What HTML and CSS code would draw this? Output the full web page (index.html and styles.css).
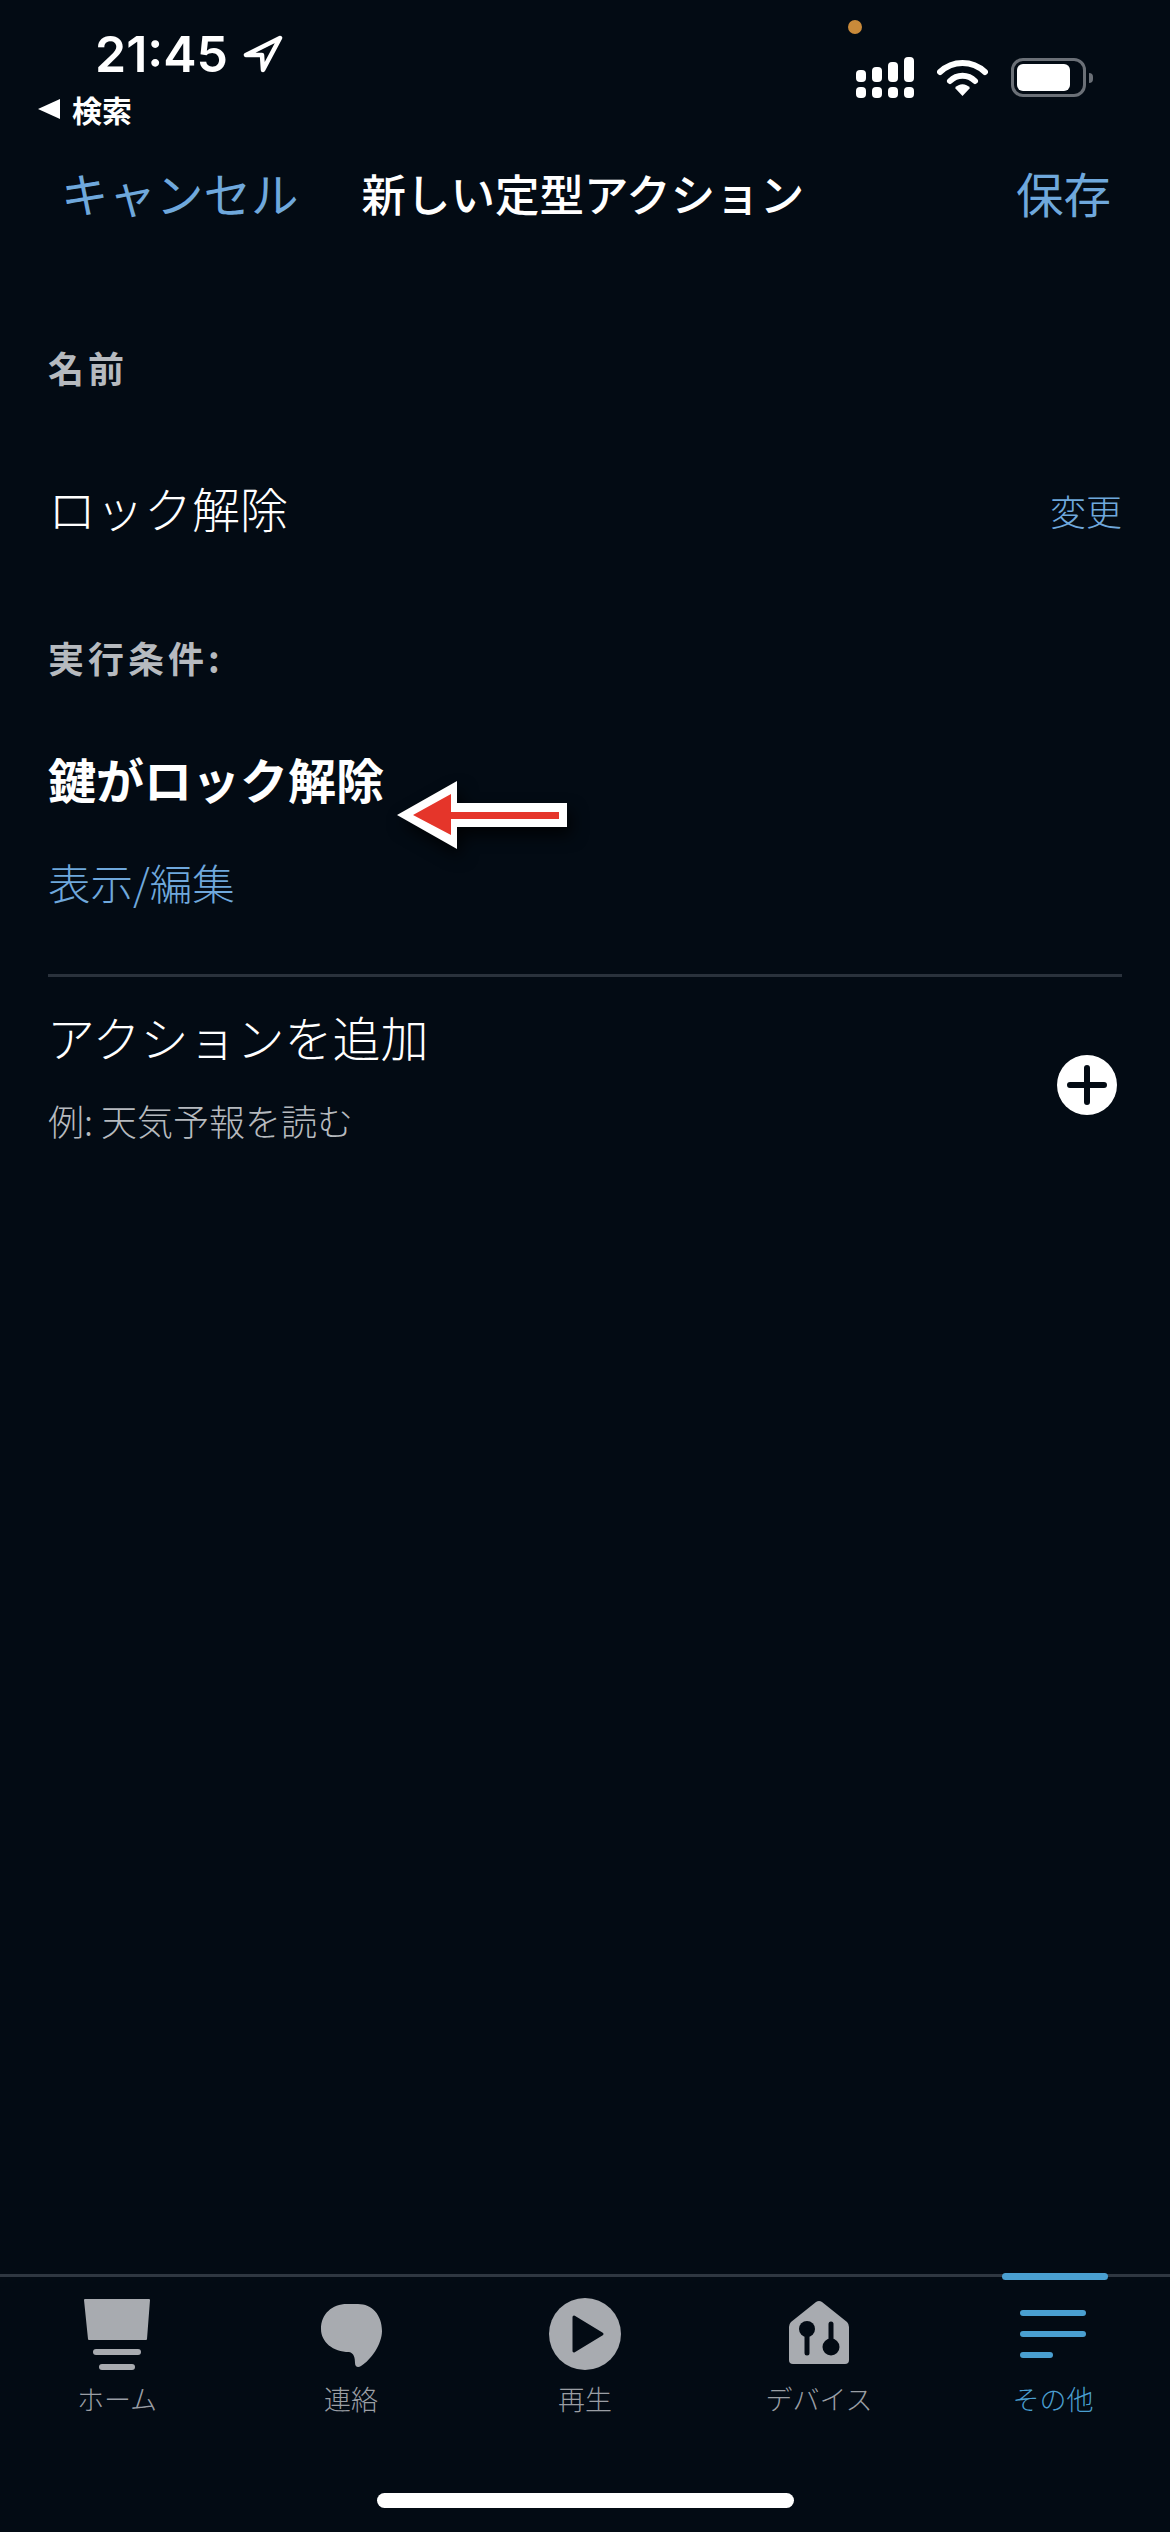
FILE: index.html
```html
<!DOCTYPE html>
<html lang="ja">
  <head>
    <meta charset="utf-8">
    <title>新しい定型アクション</title>
    <link rel="stylesheet" href="styles.css">
  </head>
  <body>
    <div class="page">
      <div class="statusbar">
        <div class="status-left">
          <div class="clock">
            <span class="time">21:45</span>
            <svg class="loc" viewBox="0 0 41 38"><path d="M38 3 L4 20 L20 20 L21 35 Z" fill="none" stroke="#fff" stroke-width="4.500" stroke-linejoin="round"/></svg>
          </div>
          <div class="back"><span class="back-arrow"></span>検索</div>
        </div>
        <div class="status-right">
          <span class="dot"></span>
          <div class="indicators">
            <svg class="signal" viewBox="0 0 58 41">
              <rect x="0" y="13" width="10" height="12" rx="4" fill="#fff"/>
              <rect x="16" y="10" width="10" height="15" rx="4" fill="#fff"/>
              <rect x="32" y="5" width="10" height="20" rx="4" fill="#fff"/>
              <rect x="48" y="0" width="10" height="25" rx="4" fill="#fff"/>
              <rect x="0" y="30" width="10" height="11" rx="4" fill="#fff"/>
              <rect x="16" y="30" width="10" height="11" rx="4" fill="#fff"/>
              <rect x="32" y="30" width="10" height="11" rx="4" fill="#fff"/>
              <rect x="48" y="30" width="10" height="11" rx="4" fill="#fff"/>
            </svg>
            <svg class="wifi" viewBox="0 0 51 37">
              <path d="M3 13 C16 1 35 1 48 13" fill="none" stroke="#fff" stroke-width="6" stroke-linecap="round"/>
              <path d="M13 22 C20 15 31 15 38 22" fill="none" stroke="#fff" stroke-width="6" stroke-linecap="round"/>
              <path d="M18 29 C22 24 29 24 33 29 L25.500 37 Z" fill="#fff"/>
            </svg>
            <div class="battery"><span class="battery-fill"></span></div>
            <span class="battery-nub"></span>
          </div>
        </div>
      </div>

      <div class="navbar">
        <a class="nav-link nav-cancel">キャンセル</a>
        <div class="nav-title">新しい定型アクション</div>
        <a class="nav-link nav-save">保存</a>
      </div>

      <div class="content">
        <div class="label label-name">名前</div>
        <div class="name-row">
          <div class="name">ロック解除</div>
          <a class="change">変更</a>
        </div>
        <div class="label label-when">実行条件:</div>
        <div class="trigger">
          <div class="trigger-name">鍵がロック解除</div>
          <svg class="arrow" viewBox="0 0 180 78">
            <path d="M10 39 L70 5 V27 H180 V51 H70 V73 Z" fill="#fff"/>
            <path d="M26 39 L64 18 V36 H172 V43 H64 V59 Z" fill="#e5352a"/>
          </svg>
        </div>
        <a class="edit">表示/編集</a>
        <div class="divider"></div>
        <div class="action-row">
          <div>
            <div class="action-title">アクションを追加</div>
            <div class="action-hint">例: 天気予報を読む</div>
          </div>
          <svg class="plus" viewBox="0 0 60 60">
            <circle cx="30" cy="30" r="30" fill="#fff"/>
            <path d="M13 30 H47 M30 13 V47" stroke="#030b14" stroke-width="6" stroke-linecap="round"/>
          </svg>
        </div>
      </div>

      <div class="tabbar">
        <div class="tab">
          <svg class="tab-icon" viewBox="0 0 72 72">
            <path d="M4 1 H68 Q69 1 69 2 L66 41 Q66 42 65 42 H8 Q7 42 7 41 L3 2 Q3 1 4 1 Z" fill="#a8abb0"/>
            <rect x="12" y="51" width="48" height="6" rx="3" fill="#a8abb0"/>
            <rect x="18" y="66" width="36" height="6" rx="3" fill="#a8abb0"/>
          </svg>
          <span class="tab-label">ホーム</span>
        </div>
        <div class="tab">
          <svg class="tab-icon" viewBox="0 0 72 72">
            <path d="M32 6 H43 C57 6 67 17 67 33 C67 46 56 62 46 68 C43 70 40 69 40 65 C40 60 39 55 34 54 C18 54 6 44 6 31 C6 16 17 6 32 6 Z" fill="#a8abb0"/>
          </svg>
          <span class="tab-label">連絡</span>
        </div>
        <div class="tab">
          <svg class="tab-icon" viewBox="0 0 72 72">
            <circle cx="36" cy="36" r="36" fill="#a8abb0"/>
            <path d="M25 19 L53 36 L25 53 Z" fill="#030b14" stroke="#030b14" stroke-width="3" stroke-linejoin="round"/>
          </svg>
          <span class="tab-label">再生</span>
        </div>
        <div class="tab">
          <svg class="tab-icon" viewBox="0 0 72 72">
            <path d="M33 4 Q36 2 39 4 L64 24 Q66 26 66 29 V62 Q66 66 62 66 H10 Q6 66 6 62 V29 Q6 26 8 24 Z" fill="#a8abb0"/>
            <circle cx="24" cy="31" r="8" fill="#030b14"/>
            <path d="M24 33 V55" stroke="#030b14" stroke-width="5" stroke-linecap="round"/>
            <circle cx="48" cy="49" r="8.500" fill="#030b14"/>
            <path d="M48 26 V46" stroke="#030b14" stroke-width="5" stroke-linecap="round"/>
          </svg>
          <span class="tab-label">デバイス</span>
        </div>
        <div class="tab tab-active">
          <span class="tab-marker"></span>
          <svg class="tab-icon" viewBox="0 0 72 72">
            <rect x="3" y="12" width="66" height="6" rx="3" fill="#4a9fd0"/>
            <rect x="3" y="33" width="66" height="6" rx="3" fill="#4a9fd0"/>
            <rect x="3" y="54" width="33" height="6" rx="3" fill="#4a9fd0"/>
          </svg>
          <span class="tab-label">その他</span>
        </div>
      </div>
      <div class="home-indicator"></div>
    </div>
  </body>
</html>
```

FILE: styles.css
```css
* {
  box-sizing: border-box;
  padding: 0;
  margin: 0;
}

body {
  background: #030b14;
  color: #fff;
  font-family: "Noto Sans CJK JP", "Noto Sans", sans-serif;
}

.page {
  display: flex;
  flex-direction: column;
  width: 1170px;
  height: 2532px;
  overflow: hidden;
}

/* status bar */
.statusbar {display: flex; justify-content: space-between; height: 153px;}
.status-left {padding: 27px 0 0 38px;}
.clock {display: flex; align-items: center; gap: 14px; height: 54px; margin-left: 57px;}
.time {font-family: Inter, sans-serif; font-size: 50px; font-weight: 600; line-height: 54px;}
.loc {width: 41px; height: 38px;}
.back {display: flex; align-items: center; gap: 12px; margin-top: 8px; font-size: 30px; font-weight: 700; line-height: 40px;}
.back-arrow {border-top: 10px solid transparent; border-bottom: 10px solid transparent; border-right: 22px solid #fff;}

.status-right {display: flex; flex-direction: column; align-items: flex-start; width: 235px; padding: 20px 0 0 0; margin-right: 79px;}
.dot {width: 14px; height: 14px; margin-left: -8px; border-radius: 50%; background: #c98a3a;}
.indicators {display: flex; align-items: center; margin-top: 23px;}
.signal {width: 58px; height: 41px;}
.wifi {width: 51px; height: 37px; margin-left: 23px;}
.battery {width: 75px; height: 39px; margin-left: 23px; padding: 3px; border: 3px solid #6b7077; border-radius: 12px;}
.battery-fill {display: block; width: 53px; height: 27px; border-radius: 6px; background: #fff;}
.battery-nub {width: 4px; height: 10px; margin-left: 3px; background: #6b7077; border-radius: 0 4px 4px 0;}

/* nav */
.navbar {display: flex; align-items: center; height: 80px; padding: 0 59px 0 61px;}
.nav-link {color: #6fa8dc; font-size: 47.500px; line-height: 80px; font-weight: 400;}
.nav-title {flex-grow: 1; margin-left: 63px; font-size: 44.500px; font-weight: 500; line-height: 80px;}

/* form */
.content {padding: 0 48px;}
.label {color: #b6babf; font-size: 36px; font-weight: 700; letter-spacing: 4px; line-height: 40px;}
.label-name {margin-top: 114px;}
.label-when {margin-top: 98px;}
.name-row {display: flex; justify-content: space-between; align-items: center; margin-top: 88px;}
.name {font-size: 48px; font-weight: 300; line-height: 64px;}
.change {color: #6fa8dc; font-size: 36px; font-weight: 300; padding-top: 6px;}
.trigger {position: relative; margin-top: 69px;}
.trigger-name {font-size: 48px; font-weight: 700; line-height: 64px;}
.arrow {position: absolute; left: 339px; top: 30px; width: 180px; height: 78px; filter: drop-shadow(4px 8px 8px rgba(0, 0, 0, 0.8));}
.edit {display: block; margin-top: 42px; color: #6fa8dc; font-size: 42.500px; font-weight: 300; line-height: 60px;}
.divider {height: 3px; margin-top: 62px; background: #2a323c;}
.action-row {display: flex; justify-content: space-between; align-items: center; padding-right: 5px; margin-top: 27px;}
.action-title {margin-left: -1px; font-size: 48px; font-weight: 300; line-height: 64px;}
.action-hint {margin-top: 30px; color: #b6babf; font-size: 36px; font-weight: 300; line-height: 44px;}
.plus {width: 60px; height: 60px; margin-top: 24px;}

/* tabs */
.tabbar {display: flex; margin-top: auto; border-top: 3px solid #2f3741;}
.tab {position: relative; display: flex; flex-direction: column; align-items: center; flex: 1; padding-top: 21px;}
.tab-icon {width: 72px; height: 72px;}
.tab-label {margin-top: 9px; color: #9a9ea4; font-size: 27px; font-weight: 300; line-height: 40px;}
.tab-active .tab-label {color: #4a9fd0;}
.tab-marker {position: absolute; top: -4px; left: 66px; width: 106px; height: 7px; border-radius: 4px; background: #4a9fd0;}
.home-indicator {width: 417px; height: 15px; margin: 74px auto 24px; border-radius: 8px; background: #fff;}
```
